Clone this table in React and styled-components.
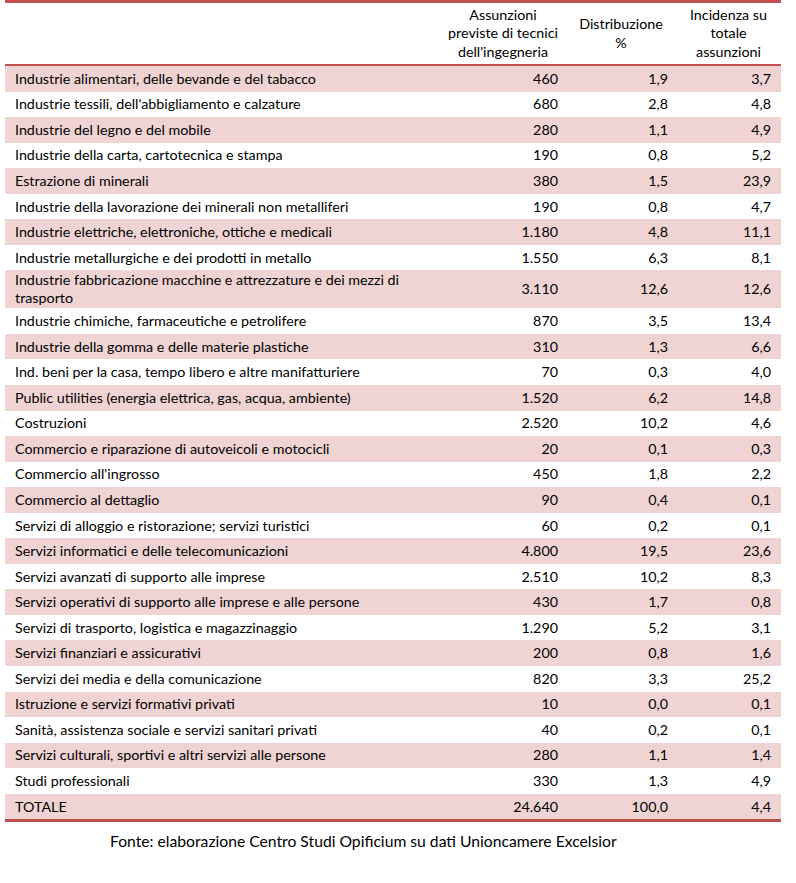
import React from "react";
import styled, { createGlobalStyle } from "styled-components";

const Global = createGlobalStyle`
  html, body { margin: 0; padding: 0; background: #fff; }
  body { font-family: Lato, "Open Sans", sans-serif; color: #000; }
`;

const rows = [
  ["Industrie alimentari, delle bevande e del tabacco", "460", "1,9", "3,7"],
  ["Industrie tessili, dell'abbigliamento e calzature", "680", "2,8", "4,8"],
  ["Industrie del legno e del mobile", "280", "1,1", "4,9"],
  ["Industrie della carta, cartotecnica e stampa", "190", "0,8", "5,2"],
  ["Estrazione di minerali", "380", "1,5", "23,9"],
  ["Industrie della lavorazione dei minerali non metalliferi", "190", "0,8", "4,7"],
  ["Industrie elettriche, elettroniche, ottiche e medicali", "1.180", "4,8", "11,1"],
  ["Industrie metallurgiche e dei prodotti in metallo", "1.550", "6,3", "8,1"],
  ["Industrie fabbricazione macchine e attrezzature e dei mezzi di trasporto", "3.110", "12,6", "12,6", true],
  ["Industrie chimiche, farmaceutiche e petrolifere", "870", "3,5", "13,4"],
  ["Industrie della gomma e delle materie plastiche", "310", "1,3", "6,6"],
  ["Ind. beni per la casa, tempo libero e altre manifatturiere", "70", "0,3", "4,0"],
  ["Public utilities (energia elettrica, gas, acqua, ambiente)", "1.520", "6,2", "14,8"],
  ["Costruzioni", "2.520", "10,2", "4,6"],
  ["Commercio e riparazione di autoveicoli e motocicli", "20", "0,1", "0,3"],
  ["Commercio all'ingrosso", "450", "1,8", "2,2"],
  ["Commercio al dettaglio", "90", "0,4", "0,1"],
  ["Servizi di alloggio e ristorazione; servizi turistici", "60", "0,2", "0,1"],
  ["Servizi informatici e delle telecomunicazioni", "4.800", "19,5", "23,6"],
  ["Servizi avanzati di supporto alle imprese", "2.510", "10,2", "8,3"],
  ["Servizi operativi di supporto alle imprese e alle persone", "430", "1,7", "0,8"],
  ["Servizi di trasporto, logistica e magazzinaggio", "1.290", "5,2", "3,1"],
  ["Servizi finanziari e assicurativi", "200", "0,8", "1,6"],
  ["Servizi dei media e della comunicazione", "820", "3,3", "25,2"],
  ["Istruzione e servizi formativi privati", "10", "0,0", "0,1"],
  ["Sanità, assistenza sociale e servizi sanitari privati", "40", "0,2", "0,1"],
  ["Servizi culturali, sportivi e altri servizi alle persone", "280", "1,1", "1,4"],
  ["Studi professionali", "330", "1,3", "4,9"],
  ["TOTALE", "24.640", "100,0", "4,4"],
];

const Table = styled.div`
  margin-left: 5px;
  width: 776px;
  border-top: 3px solid #c0504d;
  border-bottom: 3px solid #c0504d;
  font-size: 14.3px;
`;

const Grid = styled.div`
  display: grid;
  grid-template-columns: 435px 126px 110px 105px;
`;

const HeaderRow = styled(Grid)`
  height: 61px;
  border-bottom: 2px solid #c0504d;
  align-items: center;
`;

const HeadCell = styled.div`
  text-align: center;
  line-height: 18.5px;
`;

const Row = styled(Grid)`
  min-height: ${(p) => (p.$tall ? "38px" : "25.55px")};
  background: ${(p) => (p.$shaded ? "#f0d4d4" : "#fff")};
  align-items: center;
`;

const Label = styled.div`
  padding: 0 20px 0 10px;
  line-height: 18px;
`;

const Num = styled.div`
  text-align: right;
  padding-right: ${(p) => p.$pr}px;
  line-height: 18px;
`;

const Source = styled.div`
  padding: 9px 0 0 110px;
  font-size: 15.7px;
  line-height: 20px;
`;

export default function App() {
  return (
    <>
      <Global />
      <Table>
        <HeaderRow>
          <div />
          <HeadCell>
            Assunzioni
            <br />
            previste di tecnici
            <br />
            dell'ingegneria
          </HeadCell>
          <HeadCell>
            Distribuzione
            <br />%
          </HeadCell>
          <HeadCell>
            Incidenza su
            <br />
            totale
            <br />
            assunzioni
          </HeadCell>
        </HeaderRow>
        {rows.map((r, i) => (
          <Row key={i} $shaded={i % 2 === 0} $tall={r[4]}>
            <Label>{r[0]}</Label>
            <Num $pr={8}>{r[1]}</Num>
            <Num $pr={8}>{r[2]}</Num>
            <Num $pr={10}>{r[3]}</Num>
          </Row>
        ))}
      </Table>
      <Source>Fonte: elaborazione Centro Studi Opificium su dati Unioncamere Excelsior</Source>
    </>
  );
}
